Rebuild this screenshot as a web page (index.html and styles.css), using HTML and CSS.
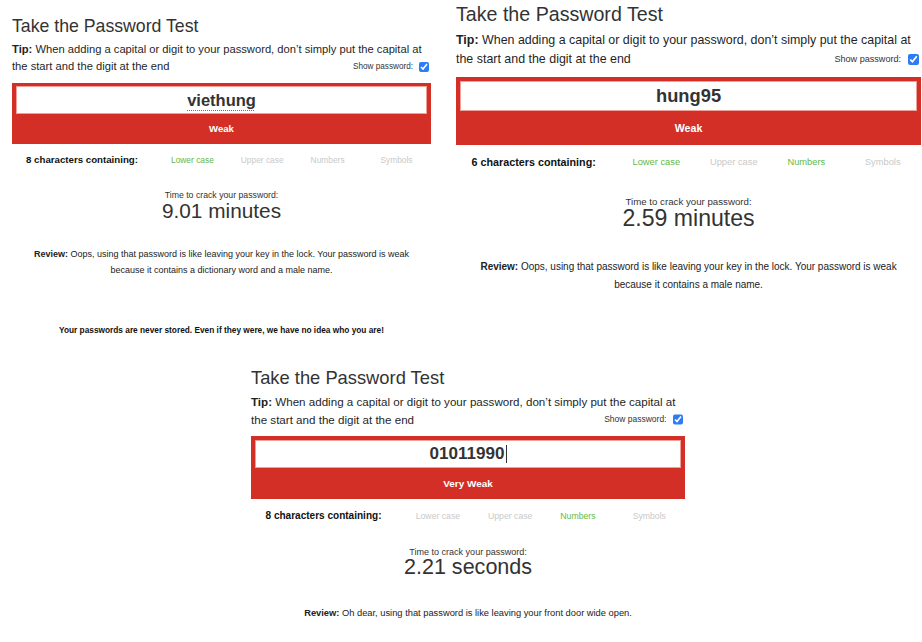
FILE: index.html
```html
<!DOCTYPE html>
<html lang="en">
<head>
<meta charset="utf-8">
<title>Take the Password Test</title>
<link rel="stylesheet" href="styles.css">
</head>
<body>
<div class="collage">
  <div class="row-top">
    <section class="panel panel--a">
      <h2 class="title">Take the Password Test</h2>
      <p class="tip"><b>Tip:</b> When adding a capital or digit to your password, don’t simply put the capital at the start and the digit at the end<label class="show">Show password: <input class="check" type="checkbox" checked></label></p>
      <div class="meter">
        <div class="field"><span class="misspelled">viethung</span></div>
        <div class="strength">Weak</div>
      </div>
      <div class="chars">
        <div class="chars-label">8 characters containing:</div>
        <div class="chars-item is-on">Lower case</div>
        <div class="chars-item">Upper case</div>
        <div class="chars-item">Numbers</div>
        <div class="chars-item">Symbols</div>
      </div>
      <div class="crack">
        <div class="crack-label">Time to crack your password:</div>
        <div class="crack-time">9.01 minutes</div>
      </div>
      <p class="review"><b>Review:</b> Oops, using that password is like leaving your key in the lock. Your password is weak because it contains a dictionary word and a male name.</p>
      <p class="footer">Your passwords are never stored. Even if they were, we have no idea who you are!</p>
    </section>

    <section class="panel panel--b">
      <h2 class="title">Take the Password Test</h2>
      <p class="tip"><b>Tip:</b> When adding a capital or digit to your password, don’t simply put the capital at the start and the digit at the end<label class="show">Show password: <input class="check" type="checkbox" checked></label></p>
      <div class="meter">
        <div class="field"><span>hung95</span></div>
        <div class="strength">Weak</div>
      </div>
      <div class="chars">
        <div class="chars-label">6 characters containing:</div>
        <div class="chars-item is-on">Lower case</div>
        <div class="chars-item">Upper case</div>
        <div class="chars-item is-on">Numbers</div>
        <div class="chars-item">Symbols</div>
      </div>
      <div class="crack">
        <div class="crack-label">Time to crack your password:</div>
        <div class="crack-time">2.59 minutes</div>
      </div>
      <p class="review"><b>Review:</b> Oops, using that password is like leaving your key in the lock. Your password is weak because it contains a male name.</p>
    </section>
  </div>

  <div class="row-bottom">
    <section class="panel panel--c">
      <h2 class="title">Take the Password Test</h2>
      <p class="tip"><b>Tip:</b> When adding a capital or digit to your password, don’t simply put the capital at the start and the digit at the end<label class="show">Show password: <input class="check" type="checkbox" checked></label></p>
      <div class="meter">
        <div class="field"><span>01011990</span><span class="caret"></span></div>
        <div class="strength">Very Weak</div>
      </div>
      <div class="chars">
        <div class="chars-label">8 characters containing:</div>
        <div class="chars-item">Lower case</div>
        <div class="chars-item">Upper case</div>
        <div class="chars-item is-on">Numbers</div>
        <div class="chars-item">Symbols</div>
      </div>
      <div class="crack">
        <div class="crack-label">Time to crack your password:</div>
        <div class="crack-time">2.21 seconds</div>
      </div>
      <p class="review"><b>Review:</b> Oh dear, using that password is like leaving your front door wide open.</p>
    </section>
  </div>
</div>
</body>
</html>
```
FILE: styles.css
```css
html, body {
  margin: 0;
  padding: 0;
  background: #fff;
}

.collage {
  width: 922px;
  height: 642px;
  overflow: hidden;
}

.row-top {
  display: flex;
  align-items: flex-start;
  height: 367px;
}

.row-bottom {
  padding-left: 251px;
}

.panel {
  --u: 1px;
  width: calc(419 * var(--u));
  font-family: "Liberation Sans", Arial, Helvetica, sans-serif;
  color: #222;
}

.panel--a {
  --u: 1px;
  margin-left: 12px;
  margin-top: 16.4px;
}

.panel--b {
  --u: 1.11px;
  margin-left: 25px;
  margin-top: 3.1px;
}

.panel--c {
  --u: 1.036px;
}

.title {
  margin: 0;
  font-weight: 400;
  font-size: calc(17.7 * var(--u));
  line-height: calc(20.4 * var(--u));
  color: #333;
}

.tip {
  margin: calc(4.7 * var(--u)) 0 0;
  font-size: calc(11.2 * var(--u));
  line-height: calc(17 * var(--u));
  color: #1f1f1f;
}

.tip b {
  color: #222;
}

.show {
  float: right;
  display: flex;
  align-items: center;
  gap: calc(6 * var(--u));
  height: calc(17 * var(--u));
  padding-right: calc(2 * var(--u));
  font-size: calc(8.2 * var(--u));
  color: #333;
}

.check {
  width: calc(10 * var(--u));
  height: calc(10 * var(--u));
  margin: 0;
  accent-color: #2d7cf6;
}

.meter {
  margin-top: calc(7.5 * var(--u));
  background: #d32f26;
  padding: calc(3.5 * var(--u)) calc(4 * var(--u)) 0;
}

.field {
  box-sizing: border-box;
  height: calc(27.5 * var(--u));
  background: #fff;
  border: 1px solid #ee9f98;
  display: flex;
  align-items: center;
  justify-content: center;
  font-weight: 700;
  font-size: calc(16.5 * var(--u));
  color: #333;
}

.misspelled {
  text-decoration: underline dotted #e0453c;
  text-decoration-thickness: 1px;
  text-underline-offset: calc(4 * var(--u));
}

.caret {
  display: inline-block;
  width: 1px;
  height: calc(17 * var(--u));
  margin-left: 1px;
  background: #333;
}

.strength {
  height: calc(30 * var(--u));
  display: flex;
  align-items: center;
  justify-content: center;
  color: #fff;
  font-weight: 700;
  font-size: calc(9.6 * var(--u));
}

.chars {
  display: grid;
  grid-template-columns: calc(140 * var(--u)) repeat(4, calc(69.8 * var(--u)));
  margin-top: calc(10 * var(--u));
  line-height: calc(12 * var(--u));
}

.chars-label {
  text-align: center;
  font-weight: 700;
  font-size: calc(9.7 * var(--u));
  color: #111;
}

.chars-item {
  padding-left: calc(19 * var(--u));
  font-size: calc(8.4 * var(--u));
  color: #c9c9c9;
  white-space: nowrap;
}

.chars-item.is-on {
  color: #64b848;
}

.crack {
  margin-top: calc(24 * var(--u));
  text-align: center;
  color: #333;
}

.crack-label {
  font-size: calc(8.73 * var(--u));
  line-height: calc(10 * var(--u));
}

.crack-time {
  font-size: calc(20.8 * var(--u));
  line-height: calc(21 * var(--u));
}

.review {
  margin: calc(25 * var(--u)) 0 0;
  padding: 0 calc(18 * var(--u));
  text-align: center;
  font-size: calc(9 * var(--u));
  line-height: calc(16 * var(--u));
  color: #222;
}

.footer {
  margin: calc(46 * var(--u)) 0 0;
  text-align: center;
  font-weight: 700;
  font-size: calc(8.3 * var(--u));
  line-height: calc(12 * var(--u));
  color: #111;
}
```
